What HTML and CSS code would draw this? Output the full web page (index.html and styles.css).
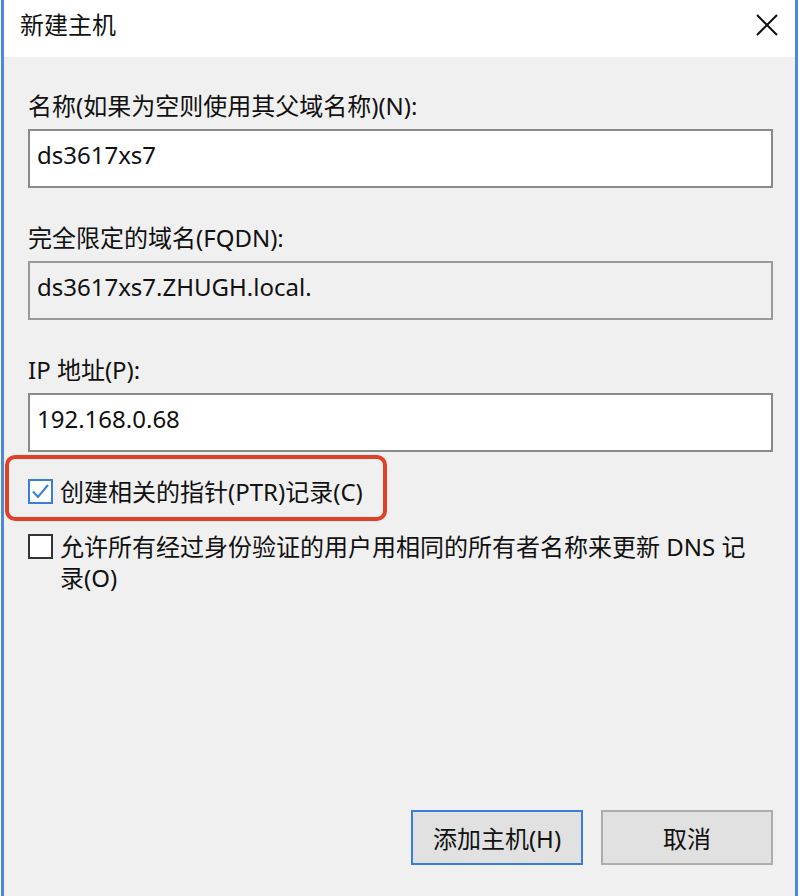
FILE: index.html
```html
<!DOCTYPE html>
<html lang="zh-CN">
<head>
    <meta charset="UTF-8">
    <meta name="viewport" content="width=device-width, initial-scale=1.0">
    <title>新建主机</title>
    <link rel="stylesheet" href="styles.css">
</head>
<body>
    <div class="window">
        <div class="title-bar">
            <span class="title">新建主机</span>
            <svg class="close" width="22" height="22" viewBox="0 0 22 22">
                <path d="M1 1 L21 21 M21 1 L1 21" stroke="#111" stroke-width="2" fill="none"/>
            </svg>
        </div>
        <div class="content">
            <div class="field">
                <label class="field-label" for="name">名称(如果为空则使用其父域名称)(N):</label>
                <input type="text" id="name" class="text-box" value="ds3617xs7">
            </div>
            <div class="field">
                <label class="field-label" for="fqdn">完全限定的域名(FQDN):</label>
                <input type="text" id="fqdn" class="text-box readonly" value="ds3617xs7.ZHUGH.local." readonly>
            </div>
            <div class="field last">
                <label class="field-label" for="ip">IP 地址(P):</label>
                <input type="text" id="ip" class="text-box" value="192.168.0.68">
            </div>

            <div class="highlight">
                <div class="check-row">
                    <span class="check-box checked">
                        <svg width="21" height="21" viewBox="0 0 21 21">
                            <path d="M3 10.5 L8 16 L18 4" stroke="#3b7fd4" stroke-width="2" fill="none"/>
                        </svg>
                    </span>
                    <span class="check-text">创建相关的指针(PTR)记录(C)</span>
                </div>
            </div>

            <div class="check-row second">
                <span class="check-box"></span>
                <span class="check-text">允许所有经过身份验证的用户用相同的所有者名称来更新 DNS 记录(O)</span>
            </div>

            <div class="buttons">
                <button class="button default">添加主机(H)</button>
                <button class="button">取消</button>
            </div>
        </div>
    </div>
</body>
</html>
```

FILE: styles.css
```css
html, body {
    margin: 0;
    height: 100%;
    background: #ffffff;
}
body {
    font-family: "Noto Sans", "Noto Sans CJK SC", sans-serif;
    font-size: 24px;
    color: #111111;
}
.window {
    height: 896px;
    margin: 0 2px 0 1px;
    border-left: 3px solid #4a8bd6;
    border-right: 3px solid #4a8bd6;
    box-sizing: border-box;
    display: flex;
    flex-direction: column;
    background: #f0f0f0;
}
.title-bar {
    height: 57px;
    background: #ffffff;
    display: flex;
    align-items: center;
    justify-content: space-between;
    padding: 0 17px 7px 16px;
    box-sizing: border-box;
}
.title {
    line-height: 32px;
}
.content {
    flex: 1;
    display: flex;
    flex-direction: column;
    padding: 33px 22px 31px 24px;
}
.field {
    display: flex;
    flex-direction: column;
    margin-bottom: 34px;
}
.field.last {
    margin-bottom: 0;
}
.field-label {
    line-height: 32px;
    margin-bottom: 7px;
}
.text-box {
    height: 59px;
    box-sizing: border-box;
    border: 2px solid #8a8a8a;
    padding: 7px 7px 16px;
    font-family: inherit;
    font-size: 24px;
    line-height: 32px;
    color: #111111;
    background: #ffffff;
    outline: none;
}
.text-box.readonly {
    background: #f0f0f0;
    border-color: #9a9a9a;
}
.highlight {
    margin: 3px 0 0 -23px;
    width: 382px;
    box-sizing: border-box;
    border: 4px solid #e23f28;
    border-radius: 10px;
    padding: 17px 0 10px 19px;
}
.check-row {
    display: flex;
    align-items: flex-start;
    gap: 7px;
}
.check-row.second {
    margin-top: 10px;
}
.check-row.second .check-text {
    max-width: 700px;
}
.check-box {
    flex: none;
    width: 25px;
    height: 25px;
    margin-top: 3px;
    box-sizing: border-box;
    border: 2px solid #333333;
    background: #ffffff;
    display: flex;
    align-items: center;
    justify-content: center;
}
.check-box.checked {
    border-color: #3b7fd4;
}
.check-text {
    line-height: 31px;
}
.buttons {
    margin-top: auto;
    display: flex;
    justify-content: flex-end;
    gap: 18px;
}
.button {
    width: 172px;
    height: 55px;
    box-sizing: border-box;
    border: 2px solid #adadad;
    background: #e1e1e1;
    font-family: inherit;
    font-size: 24px;
    color: #111111;
    padding: 0;
}
.button.default {
    border-color: #3a7fd6;
}
```
